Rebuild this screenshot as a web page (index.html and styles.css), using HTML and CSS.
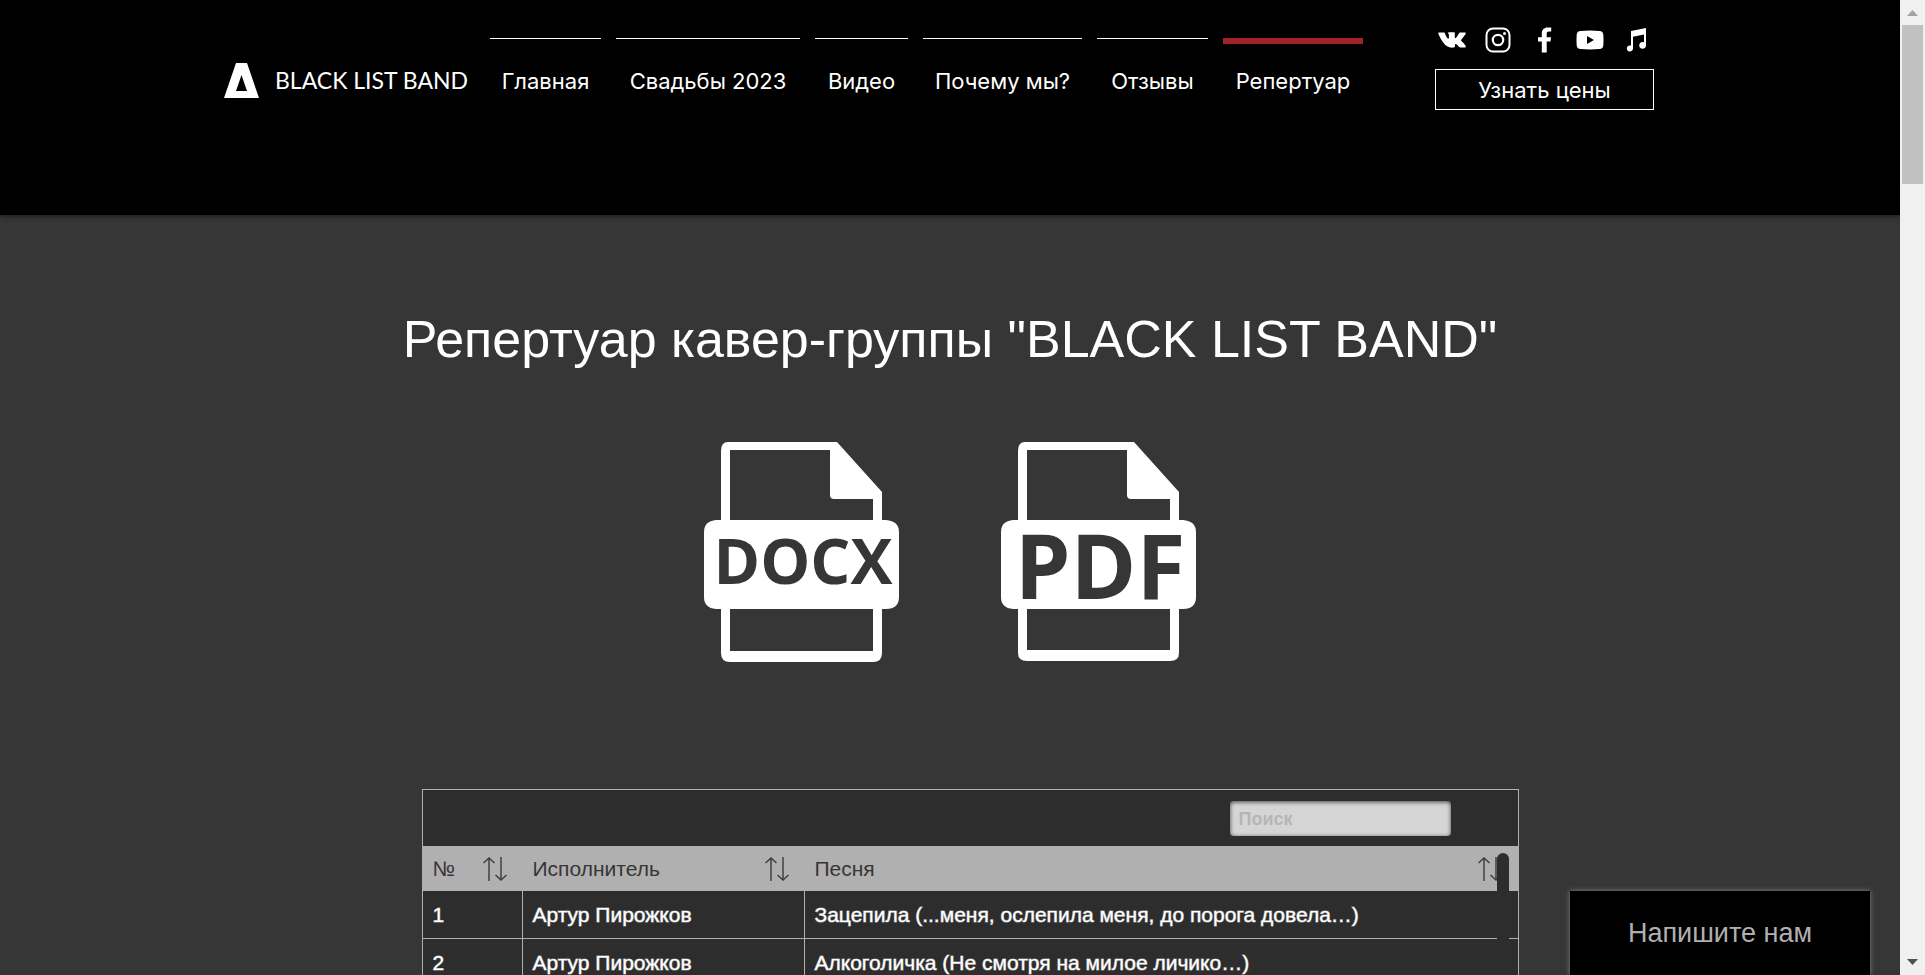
FILE: index.html
```html
<!DOCTYPE html>
<html lang="ru">
<head>
<meta charset="utf-8">
<title>Репертуар — BLACK LIST BAND</title>
<link rel="stylesheet" href="styles.css">
</head>
<body>
<div class="page">
  <header class="header">
    <div class="header-inner">
      <a class="brand" href="#">
        <svg class="brand-mark" viewBox="0 0 35 35" aria-hidden="true"><path fill="#fff" fill-rule="evenodd" d="M12 0h11l12 35H0zM17.500 12L12 28h11z"/></svg>
        <span class="brand-name">BLACK LIST BAND</span>
      </a>
      <nav class="nav">
        <a href="#">Главная</a>
        <a href="#">Свадьбы 2023</a>
        <a href="#">Видео</a>
        <a href="#">Почему мы?</a>
        <a href="#">Отзывы</a>
        <a href="#" class="active">Репертуар</a>
      </nav>
      <div class="contact">
        <div class="social">
          <a href="#" aria-label="VK"><svg viewBox="0 0 28 28"><path fill="#fff" d="M1 6.500h5c.6 0 .8.400 1 .900 1 2.800 2.400 5.300 3.300 5.300.5 0 .6-.5.6-1.700V8.800c0-1.300-.9-1.200-.9-1.800 0-.4.4-.7.900-.7h5c.7 0 .9.400.9 1v4.200c0 .6.200.8.500.8 1.100 0 3-3.600 3.800-5.200.2-.4.500-.6 1.100-.6h4.800c.8 0 .9.500.7 1-.6 1.700-3.800 5.400-4.400 6.200-.4.500-.3.800.1 1.200 1.200 1.200 3.500 3.300 4.300 5 .4.900-.1 1.600-1 1.600h-4.500c-1.500 0-3-3.500-4.500-3.500-.7 0-.7.500-.7 1.400 0 1.600-.4 2.200-1.900 2.200-4 .4-7.500-1.400-9.900-5C3.300 13.800 1.800 11.100.4 7.700.1 6.900.2 6.500 1 6.500z"/></svg></a>
          <a href="#" aria-label="Instagram"><svg viewBox="0 0 28 28" fill="none" stroke="#fff"><rect x="2.500" y="2.500" width="23" height="23" rx="6.500" stroke-width="2"/><circle cx="14" cy="14" r="5.200" stroke-width="2.200"/><circle cx="20.500" cy="7.500" r="1.500" fill="#fff" stroke="none"/></svg></a>
          <a href="#" aria-label="Facebook"><svg viewBox="0 0 28 28"><path fill="#fff" d="M11.800 26.500V15.400H8v-4.200h3.800V7.700c0-4 2.200-6.200 5.900-6.200h3.500v4h-2.300c-1.800 0-2.200.8-2.200 2.200v3.500h4.400l-.6 4.200h-3.800v11.100z"/></svg></a>
          <a href="#" aria-label="YouTube"><svg viewBox="0 0 28 28"><path fill="#fff" fill-rule="evenodd" d="M4.500 4.900Q14 4 23.500 4.900 27 5.200 27.300 8.500q.5 5.500 0 11-.3 3.300-3.800 3.600-9.500.9-19 0Q1 22.800.7 19.500q-.5-5.500 0-11Q1 5.200 4.500 4.900zM11 10v8l7-4z"/></svg></a>
          <a href="#" aria-label="Музыка"><svg viewBox="0 0 28 28"><path fill="#fff" d="M9 5L24 2v17.500a3.400 3.400 0 1 1-2-3.200V8.500L11 10.700V22.500a3.100 3.100 0 1 1-2-2.900z"/></svg></a>
        </div>
        <button class="price" type="button">Узнать цены</button>
      </div>
    </div>
  </header>

  <main class="main">
    <h1>Репертуар кавер-группы "BLACK LIST BAND"</h1>
    <div class="files">
      <a href="#" aria-label="Скачать DOCX">
        <svg viewBox="0 0 195 220"><path fill="#fff" fill-rule="evenodd" d="M24 0H133L178 50V78H182Q195 79 195 90V155Q195 167 182 167H178V211Q178 220 169 220H26Q17 220 17 211V167H12Q0 166 0 155V90Q0 79 12 78H17V9Q17 0 24 0zM26 8V78H169V57H130Q126 57 126 53V8zM26 167V209H169V167z"/><text class="label-docx" x="99" y="142" text-anchor="middle">DOCX</text></svg>
      </a>
      <a href="#" aria-label="Скачать PDF">
        <svg viewBox="0 0 195 220"><path fill="#fff" fill-rule="evenodd" d="M24 0H133L178 50V78H182Q195 79 195 90V155Q195 167 182 167H178V211Q178 219 169 219H26Q17 219 17 211V167H12Q0 166 0 155V90Q0 79 12 78H17V9Q17 0 24 0zM26 8V78H169V57H130Q126 57 126 53V8zM26 167V208H169V167z"/><text class="label-pdf" x="99" y="157" text-anchor="middle">PDF</text></svg>
      </a>
    </div>

    <section class="songs">
      <div class="toolbar"><input class="search" type="text" placeholder="Поиск" aria-label="Поиск"></div>
      <table>
        <colgroup><col class="col-num"><col class="col-artist"><col></colgroup>
        <thead>
          <tr>
            <th><span class="th"><span>№</span><svg class="sort" viewBox="0 0 24 24"><path d="M6 24V1M0.500 6L6 1l5.500 5M18 0v23M12.500 18l5.500 5 5.500-5"/></svg></span></th>
            <th><span class="th"><span>Исполнитель</span><svg class="sort" viewBox="0 0 24 24"><path d="M6 24V1M0.500 6L6 1l5.500 5M18 0v23M12.500 18l5.500 5 5.500-5"/></svg></span></th>
            <th><span class="th"><span>Песня</span><svg class="sort" viewBox="0 0 24 24"><path d="M6 24V1M0.500 6L6 1l5.500 5M18 0v23M12.500 18l5.500 5 5.500-5"/></svg></span></th>
          </tr>
        </thead>
        <tbody>
          <tr><td>1</td><td>Артур Пирожков</td><td>Зацепила (...меня, ослепила меня, до порога довела…)</td></tr>
          <tr><td>2</td><td>Артур Пирожков</td><td>Алкоголичка (Не смотря на милое личико…)</td></tr>
        </tbody>
      </table>
      <div class="songs-thumb"></div>
    </section>
  </main>
  <button class="chat" type="button">Напишите нам</button>
</div>
<div class="scrollbar" aria-hidden="true">
  <svg viewBox="0 0 25 25"><path fill="#a3a3a3" d="M7 16l5.500-6 5.500 6z"/></svg>
  <div class="scroll-thumb"></div>
  <svg viewBox="0 0 25 25"><path fill="#505050" d="M7 9h11l-5.500 6z"/></svg>
</div>
</body>
</html>
```

FILE: styles.css
```css
* { box-sizing: border-box; }

body {
  margin: 0;
  height: 100vh;
  display: grid;
  grid-template-columns: minmax(0, 1fr) 25px;
  overflow: hidden;
  background: #363636;
  color: #fff;
  font-family: "Liberation Sans", Arial, sans-serif;
}

a { color: inherit; text-decoration: none; }
svg { display: block; }

.page {
  position: relative;
  height: 100vh;
  overflow: hidden;
}

.header {
  position: relative;
  height: 215px;
  background: #000;
  box-shadow: 0 1px 5px rgba(0, 0, 0, 0.6);
}

.header-inner {
  display: flex;
  align-items: flex-start;
  max-width: 1452px;
  margin: 0 auto;
}

.brand {
  display: flex;
  align-items: center;
  gap: 16px;
  width: 266px;
  padding-top: 63px;
}
.brand-mark { width: 35px; height: 35px; }
.brand-name {
  font: 23px/35px Lato, sans-serif;
  white-space: nowrap;
}

.nav {
  display: grid;
  grid-template-columns: 111px 184px 93px 159px 111px 140px;
  gap: 15px;
  padding-top: 38px;
}
.nav a {
  height: 60px;
  padding-top: 27px;
  border-top: 1px solid #fff;
  font: 22px/30px Inter, sans-serif;
  text-align: center;
  white-space: nowrap;
}
.nav .active {
  padding-top: 22px;
  border-top: 6px solid #a02128;
}

.contact {
  width: 219px;
  margin-left: 72px;
  padding-top: 26px;
}
.social {
  display: flex;
  gap: 18px;
  padding-left: 3px;
}
.social svg { width: 28px; height: 28px; }
.price {
  display: block;
  width: 100%;
  height: 41px;
  margin-top: 15px;
  padding: 0;
  border: 1px solid #fff;
  background: #000;
  color: #fff;
  font: 22px/30px Inter, sans-serif;
}

.main {
  display: flex;
  flex-direction: column;
  align-items: center;
}

h1 {
  margin: 94px 0 0;
  font-size: 52px;
  line-height: 60px;
  font-weight: 400;
}

.files {
  display: flex;
  gap: 102px;
  margin-top: 73px;
}
.files svg { width: 195px; height: 220px; }
.label-docx,
.label-pdf {
  font-family: "Open Sans", sans-serif;
  font-weight: 700;
  fill: #363636;
}
.label-docx { font-size: 63px; }
.label-pdf { font-size: 89px; }

.songs {
  position: relative;
  width: 1097px;
  margin: 127px 0 0 40px;
  border: 1px solid #b0b0b0;
  background: #2d2d2d;
}
.toolbar {
  display: flex;
  justify-content: flex-end;
  height: 56px;
  padding: 11px 67px 0 0;
}
.search {
  width: 221px;
  height: 35px;
  padding: 2px 9px 0;
  border: 0;
  border-radius: 4px;
  background: #d5d5d5;
  box-shadow: inset 0 1px 4px rgba(0, 0, 0, 0.7);
  font: 700 18px/24px "Liberation Sans", Arial, sans-serif;
}
.search::placeholder { color: #b5b5b5; opacity: 1; }

table {
  width: 100%;
  table-layout: fixed;
  border-collapse: separate;
  border-spacing: 0;
  font-size: 21px;
  line-height: 24px;
}
.col-num { width: 100px; }
.col-artist { width: 282px; }
th {
  height: 45px;
  padding: 0 16px 0 10px;
  background: #b0b0b0;
  color: #363636;
  font-weight: 400;
}
.th {
  display: flex;
  align-items: center;
  justify-content: space-between;
}
.sort {
  width: 24px;
  height: 24px;
  fill: none;
  stroke: #404040;
  stroke-width: 1.500;
}
td {
  height: 48px;
  padding: 0 10px;
  border-right: 1px solid #b0b0b0;
  border-bottom: 1px solid #b0b0b0;
  -webkit-text-stroke: 1px rgba(255, 255, 255, 0.5);
}
td:last-child { border-right: 0; }

.songs-thumb {
  position: absolute;
  top: 63px;
  right: 9px;
  bottom: 0;
  width: 12px;
  border-radius: 6px 6px 0 0;
  background: #2d2d2d;
}

.chat {
  position: absolute;
  right: 30px;
  bottom: 0;
  width: 300px;
  height: 84px;
  border: 0;
  background: #000;
  box-shadow: 0 0 5px rgba(255, 255, 255, 0.4);
  color: #b0b0b0;
  font: 27px/30px "Liberation Sans", Arial, sans-serif;
}

.scrollbar {
  display: grid;
  grid-template-rows: 25px 1fr 25px;
  background: #f0f0f0;
}
.scroll-thumb {
  height: 159px;
  margin: 0 2px;
  background: #c1c1c1;
}
```
